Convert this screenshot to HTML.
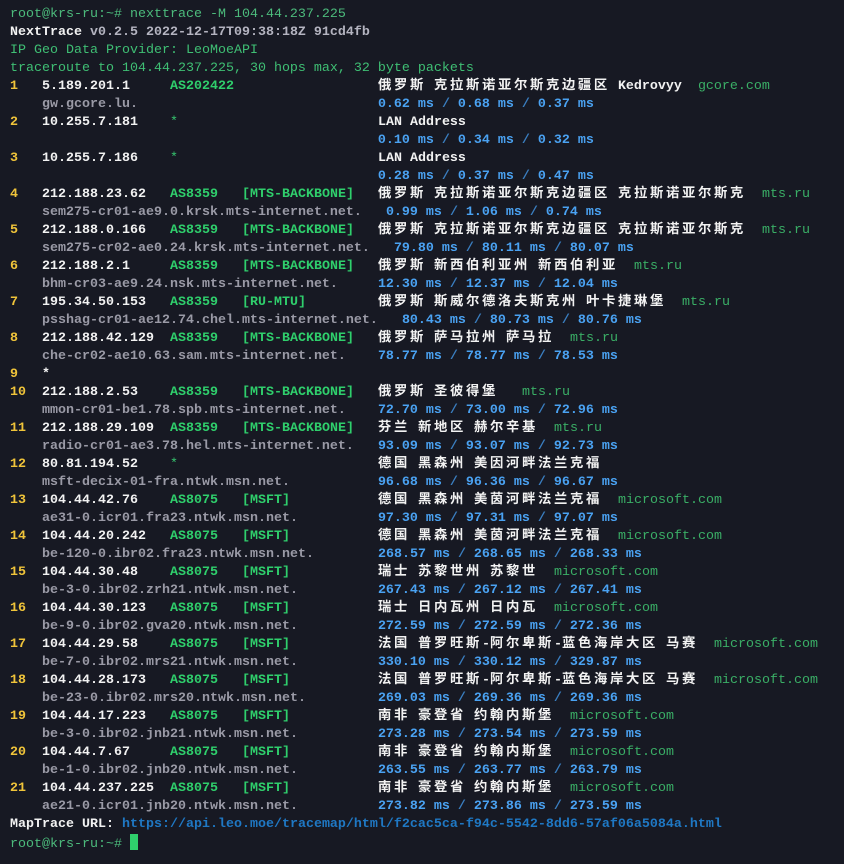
<!DOCTYPE html><html><head><meta charset="utf-8"><style>
body{margin:0;background:#171923;width:844px;height:864px;overflow:hidden}
pre{margin:0;padding:6px 0 0 10px;font:13.33px/18px "Liberation Mono","Noto Sans CJK SC",monospace;color:#e8e8ec;white-space:pre}
.p{color:#4cbb7c}.w{color:#f2f2f2;font-weight:bold}.v{color:#b4b4c0;font-weight:bold}.g{color:#3fbf74}
.y{color:#f0c43a;font-weight:bold}.a{color:#2fcf6c;font-weight:bold}.m{color:#36c46e}.d{color:#3aae66}
.h{color:#9a9aa6;font-weight:bold}.b{color:#4aa2f2;font-weight:bold}.s{color:#3a7ec0}.u{color:#1f78c4;font-weight:bold}
.c{letter-spacing:2.67px;font-family:"Noto Sans CJK SC",sans-serif;font-weight:bold;color:#f2f2f2;line-height:10px}
.cur{display:inline-block;width:8px;height:16px;background:#2fcf6c;vertical-align:-3px}
</style></head><body><pre><span class="p">root@krs-ru:~# nexttrace -M 104.44.237.225</span>
<span class="w">NextTrace</span> <span class="v">v0.2.5 2022-12-17T09:38:18Z 91cd4fb</span>
<span class="g">IP Geo Data Provider: LeoMoeAPI</span>
<span class="g">traceroute to 104.44.237.225, 30 hops max, 32 byte packets</span>
<span class="y">1</span>   <span class="w">5.189.201.1</span>     <span class="a">AS202422</span>                  <span class="c">俄罗斯</span> <span class="c">克拉斯诺亚尔斯克边疆区</span> <span class="w">Kedrovyy</span>  <span class="d">gcore.com</span>
    <span class="h">gw.gcore.lu.</span>                              <span class="b">0.62 ms <span class="s">/</span> 0.68 ms <span class="s">/</span> 0.37 ms</span>
<span class="y">2</span>   <span class="w">10.255.7.181</span>    <span class="m">*</span>                         <span class="w">LAN Address</span>
                                              <span class="b">0.10 ms <span class="s">/</span> 0.34 ms <span class="s">/</span> 0.32 ms</span>
<span class="y">3</span>   <span class="w">10.255.7.186</span>    <span class="m">*</span>                         <span class="w">LAN Address</span>
                                              <span class="b">0.28 ms <span class="s">/</span> 0.37 ms <span class="s">/</span> 0.47 ms</span>
<span class="y">4</span>   <span class="w">212.188.23.62</span>   <span class="a">AS8359</span>   <span class="a">[MTS-BACKBONE]</span>   <span class="c">俄罗斯</span> <span class="c">克拉斯诺亚尔斯克边疆区</span> <span class="c">克拉斯诺亚尔斯克</span>  <span class="d">mts.ru</span>
    <span class="h">sem275-cr01-ae9.0.krsk.mts-internet.net.</span>   <span class="b">0.99 ms <span class="s">/</span> 1.06 ms <span class="s">/</span> 0.74 ms</span>
<span class="y">5</span>   <span class="w">212.188.0.166</span>   <span class="a">AS8359</span>   <span class="a">[MTS-BACKBONE]</span>   <span class="c">俄罗斯</span> <span class="c">克拉斯诺亚尔斯克边疆区</span> <span class="c">克拉斯诺亚尔斯克</span>  <span class="d">mts.ru</span>
    <span class="h">sem275-cr02-ae0.24.krsk.mts-internet.net.</span>   <span class="b">79.80 ms <span class="s">/</span> 80.11 ms <span class="s">/</span> 80.07 ms</span>
<span class="y">6</span>   <span class="w">212.188.2.1</span>     <span class="a">AS8359</span>   <span class="a">[MTS-BACKBONE]</span>   <span class="c">俄罗斯</span> <span class="c">新西伯利亚州</span> <span class="c">新西伯利亚</span>  <span class="d">mts.ru</span>
    <span class="h">bhm-cr03-ae9.24.nsk.mts-internet.net.</span>     <span class="b">12.30 ms <span class="s">/</span> 12.37 ms <span class="s">/</span> 12.04 ms</span>
<span class="y">7</span>   <span class="w">195.34.50.153</span>   <span class="a">AS8359</span>   <span class="a">[RU-MTU]</span>         <span class="c">俄罗斯</span> <span class="c">斯威尔德洛夫斯克州</span> <span class="c">叶卡捷琳堡</span>  <span class="d">mts.ru</span>
    <span class="h">psshag-cr01-ae12.74.chel.mts-internet.net.</span>   <span class="b">80.43 ms <span class="s">/</span> 80.73 ms <span class="s">/</span> 80.76 ms</span>
<span class="y">8</span>   <span class="w">212.188.42.129</span>  <span class="a">AS8359</span>   <span class="a">[MTS-BACKBONE]</span>   <span class="c">俄罗斯</span> <span class="c">萨马拉州</span> <span class="c">萨马拉</span>  <span class="d">mts.ru</span>
    <span class="h">che-cr02-ae10.63.sam.mts-internet.net.</span>    <span class="b">78.77 ms <span class="s">/</span> 78.77 ms <span class="s">/</span> 78.53 ms</span>
<span class="y">9</span>   <span class="w">*</span>
<span class="y">10</span>  <span class="w">212.188.2.53</span>    <span class="a">AS8359</span>   <span class="a">[MTS-BACKBONE]</span>   <span class="c">俄罗斯</span> <span class="c">圣彼得堡</span>   <span class="d">mts.ru</span>
    <span class="h">mmon-cr01-be1.78.spb.mts-internet.net.</span>    <span class="b">72.70 ms <span class="s">/</span> 73.00 ms <span class="s">/</span> 72.96 ms</span>
<span class="y">11</span>  <span class="w">212.188.29.109</span>  <span class="a">AS8359</span>   <span class="a">[MTS-BACKBONE]</span>   <span class="c">芬兰</span> <span class="c">新地区</span> <span class="c">赫尔辛基</span>  <span class="d">mts.ru</span>
    <span class="h">radio-cr01-ae3.78.hel.mts-internet.net.</span>   <span class="b">93.09 ms <span class="s">/</span> 93.07 ms <span class="s">/</span> 92.73 ms</span>
<span class="y">12</span>  <span class="w">80.81.194.52</span>    <span class="m">*</span>                         <span class="c">德国</span> <span class="c">黑森州</span> <span class="c">美因河畔法兰克福</span>
    <span class="h">msft-decix-01-fra.ntwk.msn.net.</span>           <span class="b">96.68 ms <span class="s">/</span> 96.36 ms <span class="s">/</span> 96.67 ms</span>
<span class="y">13</span>  <span class="w">104.44.42.76</span>    <span class="a">AS8075</span>   <span class="a">[MSFT]</span>           <span class="c">德国</span> <span class="c">黑森州</span> <span class="c">美茵河畔法兰克福</span>  <span class="d">microsoft.com</span>
    <span class="h">ae31-0.icr01.fra23.ntwk.msn.net.</span>          <span class="b">97.30 ms <span class="s">/</span> 97.31 ms <span class="s">/</span> 97.07 ms</span>
<span class="y">14</span>  <span class="w">104.44.20.242</span>   <span class="a">AS8075</span>   <span class="a">[MSFT]</span>           <span class="c">德国</span> <span class="c">黑森州</span> <span class="c">美茵河畔法兰克福</span>  <span class="d">microsoft.com</span>
    <span class="h">be-120-0.ibr02.fra23.ntwk.msn.net.</span>        <span class="b">268.57 ms <span class="s">/</span> 268.65 ms <span class="s">/</span> 268.33 ms</span>
<span class="y">15</span>  <span class="w">104.44.30.48</span>    <span class="a">AS8075</span>   <span class="a">[MSFT]</span>           <span class="c">瑞士</span> <span class="c">苏黎世州</span> <span class="c">苏黎世</span>  <span class="d">microsoft.com</span>
    <span class="h">be-3-0.ibr02.zrh21.ntwk.msn.net.</span>          <span class="b">267.43 ms <span class="s">/</span> 267.12 ms <span class="s">/</span> 267.41 ms</span>
<span class="y">16</span>  <span class="w">104.44.30.123</span>   <span class="a">AS8075</span>   <span class="a">[MSFT]</span>           <span class="c">瑞士</span> <span class="c">日内瓦州</span> <span class="c">日内瓦</span>  <span class="d">microsoft.com</span>
    <span class="h">be-9-0.ibr02.gva20.ntwk.msn.net.</span>          <span class="b">272.59 ms <span class="s">/</span> 272.59 ms <span class="s">/</span> 272.36 ms</span>
<span class="y">17</span>  <span class="w">104.44.29.58</span>    <span class="a">AS8075</span>   <span class="a">[MSFT]</span>           <span class="c">法国</span> <span class="c">普罗旺斯</span><span class="w">-</span><span class="c">阿尔卑斯</span><span class="w">-</span><span class="c">蓝色海岸大区</span> <span class="c">马赛</span>  <span class="d">microsoft.com</span>
    <span class="h">be-7-0.ibr02.mrs21.ntwk.msn.net.</span>          <span class="b">330.10 ms <span class="s">/</span> 330.12 ms <span class="s">/</span> 329.87 ms</span>
<span class="y">18</span>  <span class="w">104.44.28.173</span>   <span class="a">AS8075</span>   <span class="a">[MSFT]</span>           <span class="c">法国</span> <span class="c">普罗旺斯</span><span class="w">-</span><span class="c">阿尔卑斯</span><span class="w">-</span><span class="c">蓝色海岸大区</span> <span class="c">马赛</span>  <span class="d">microsoft.com</span>
    <span class="h">be-23-0.ibr02.mrs20.ntwk.msn.net.</span>         <span class="b">269.03 ms <span class="s">/</span> 269.36 ms <span class="s">/</span> 269.36 ms</span>
<span class="y">19</span>  <span class="w">104.44.17.223</span>   <span class="a">AS8075</span>   <span class="a">[MSFT]</span>           <span class="c">南非</span> <span class="c">豪登省</span> <span class="c">约翰内斯堡</span>  <span class="d">microsoft.com</span>
    <span class="h">be-3-0.ibr02.jnb21.ntwk.msn.net.</span>          <span class="b">273.28 ms <span class="s">/</span> 273.54 ms <span class="s">/</span> 273.59 ms</span>
<span class="y">20</span>  <span class="w">104.44.7.67</span>     <span class="a">AS8075</span>   <span class="a">[MSFT]</span>           <span class="c">南非</span> <span class="c">豪登省</span> <span class="c">约翰内斯堡</span>  <span class="d">microsoft.com</span>
    <span class="h">be-1-0.ibr02.jnb20.ntwk.msn.net.</span>          <span class="b">263.55 ms <span class="s">/</span> 263.77 ms <span class="s">/</span> 263.79 ms</span>
<span class="y">21</span>  <span class="w">104.44.237.225</span>  <span class="a">AS8075</span>   <span class="a">[MSFT]</span>           <span class="c">南非</span> <span class="c">豪登省</span> <span class="c">约翰内斯堡</span>  <span class="d">microsoft.com</span>
    <span class="h">ae21-0.icr01.jnb20.ntwk.msn.net.</span>          <span class="b">273.82 ms <span class="s">/</span> 273.86 ms <span class="s">/</span> 273.59 ms</span>
<span class="w">MapTrace URL:</span> <span class="u">https://api.leo.moe/tracemap/html/f2cac5ca-f94c-5542-8dd6-57af06a5084a.html</span>
<span class="p">root@krs-ru:~#</span> <span class="cur"></span></pre></body></html>
